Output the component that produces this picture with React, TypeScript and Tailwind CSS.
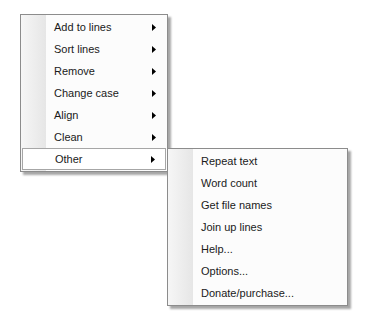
const mainItems = ["Add to lines", "Sort lines", "Remove", "Change case", "Align", "Clean", "Other"];
const subItems = ["Repeat text", "Word count", "Get file names", "Join up lines", "Help...", "Options...", "Donate/purchase..."];

function Arrow() {
  return (
    <svg width="4" height="7" viewBox="0 0 4 7" className="block">
      <path d="M0 0 L4 3.5 L0 7 Z" fill="#000" />
    </svg>
  );
}

function Menu({
  items,
  width,
  arrows,
  active,
  className,
}: {
  items: string[];
  width: string;
  arrows?: boolean;
  active?: number;
  className: string;
}) {
  return (
    <div
      className={`absolute ${width} ${className} border border-[#8c8c8c] bg-[#fcfcfc] py-[1px] shadow-[3px_3px_2px_rgba(0,0,0,0.35)]`}
    >
      <div className="absolute left-0 top-0 bottom-0 w-[25px] bg-gradient-to-r from-[#f6f6f6] to-[#e6e6e6]" />
      <div className="relative flex flex-col">
        {items.map((label, i) => (
          <div
            key={label}
            className={`mx-[1px] flex h-[22px] items-center pl-[32px] pr-[10px] ${
              active === i ? "border border-[#a6a6a6] bg-white pl-[31px]" : ""
            }`}
          >
            <span className="flex-1 text-[11px] text-[#1a1a1a]">{label}</span>
            {arrows && <Arrow />}
          </div>
        ))}
      </div>
    </div>
  );
}

export default function App() {
  return (
    <div className="relative h-[331px] w-[373px] bg-white font-['Liberation_Sans',Arial,sans-serif]">
      <Menu items={mainItems} width="w-[148px]" arrows active={6} className="left-[20px] top-[14px]" />
      <Menu items={subItems} width="w-[181px]" className="left-[167px] top-[148px]" />
    </div>
  );
}
